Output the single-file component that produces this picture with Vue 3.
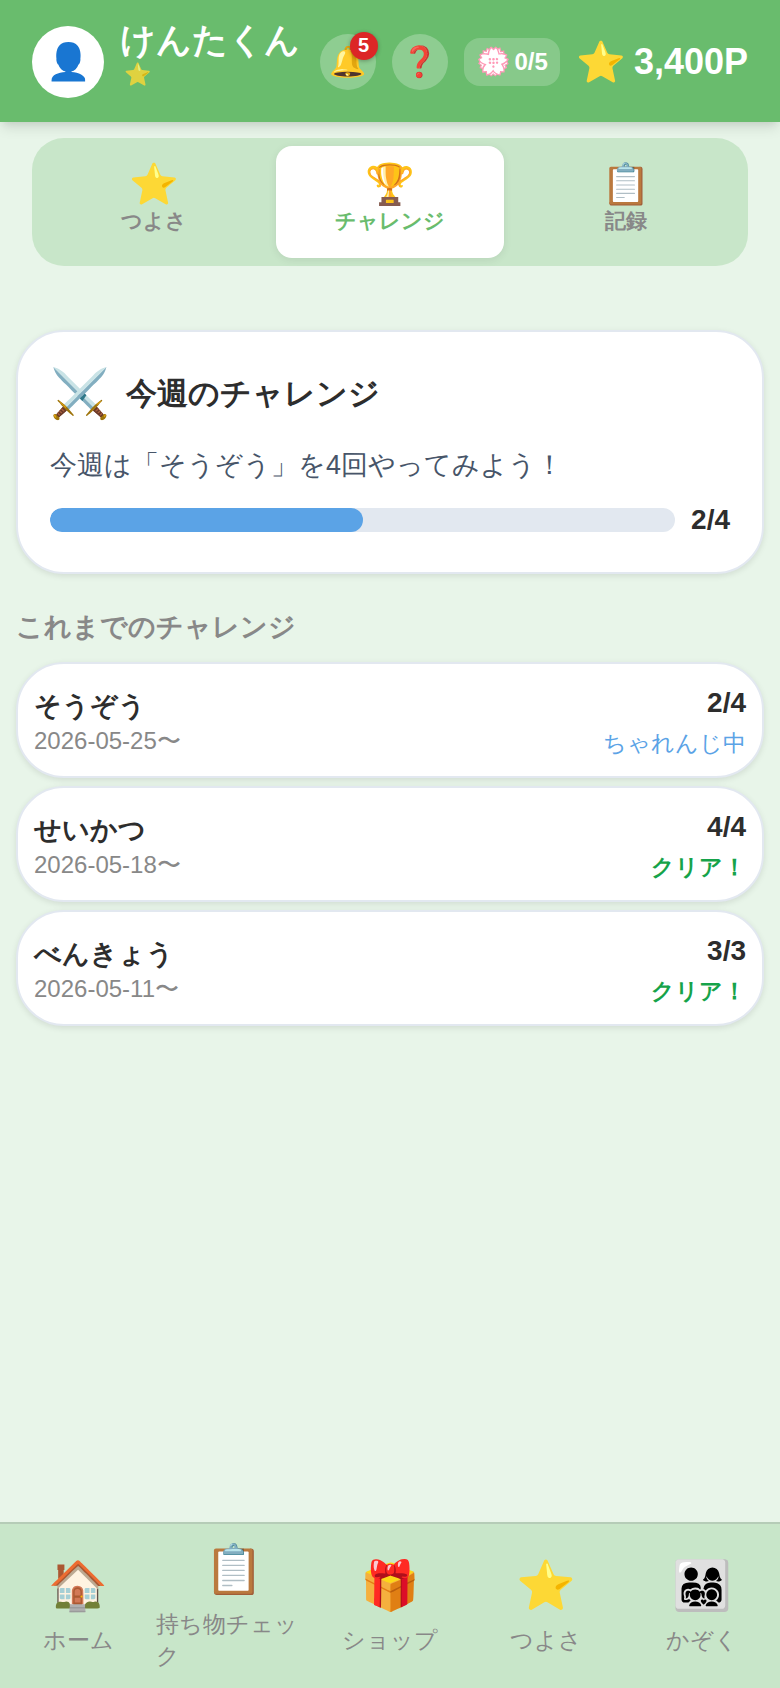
<script setup>
import { ref } from 'vue'

const tabs = [
  { id: 'strength', icon: '⭐', label: 'つよさ' },
  { id: 'challenge', icon: '🏆', label: 'チャレンジ' },
  { id: 'record', icon: '📋', label: '記録' }
]
const activeTab = ref('challenge')

const current = { done: 2, goal: 4 }

const history = [
  { name: 'そうぞう', date: '2026-05-25〜', score: '2/4', status: 'ちゃれんじ中', cleared: false },
  { name: 'せいかつ', date: '2026-05-18〜', score: '4/4', status: 'クリア！', cleared: true },
  { name: 'べんきょう', date: '2026-05-11〜', score: '3/3', status: 'クリア！', cleared: true }
]

const navItems = [
  { icon: '🏠', label: 'ホーム' },
  { icon: '📋', label: '持ち物チェック' },
  { icon: '🎁', label: 'ショップ' },
  { icon: '⭐', label: 'つよさ' },
  { icon: '👨‍👩‍👧‍👦', label: 'かぞく' }
]
</script>

<template>
  <div class="app">
    <header class="header">
      <button class="avatar" type="button" aria-label="プロフィール">👤</button>
      <div class="profile">
        <div class="name">けんたくん</div>
        <div class="rank">⭐</div>
      </div>
      <div class="actions">
        <button class="round" type="button" aria-label="おしらせ">🔔<span class="badge">5</span></button>
        <button class="round" type="button" aria-label="ヘルプ">❓</button>
        <button class="stamp" type="button"><span class="stamp-icon">💮</span><b>0/5</b></button>
        <div class="points"><span class="points-icon">⭐</span><b>3,400P</b></div>
      </div>
    </header>

    <div class="tabs" role="tablist">
      <button
        v-for="tab in tabs"
        :key="tab.id"
        class="tab"
        :class="{ active: activeTab === tab.id }"
        type="button"
        role="tab"
        :aria-selected="activeTab === tab.id"
        @click="activeTab = tab.id"
      >
        <span class="tab-icon">{{ tab.icon }}</span>
        <span class="tab-label">{{ tab.label }}</span>
      </button>
    </div>

    <main class="main">
      <section class="card weekly">
        <div class="weekly-head">
          <span class="weekly-icon">⚔️</span>
          <h2>今週のチャレンジ</h2>
        </div>
        <p>今週は「そうぞう」を4回やってみよう！</p>
        <div class="progress">
          <div class="track">
            <div class="fill" :style="{ width: (current.done / current.goal) * 100 + '%' }"></div>
          </div>
          <b>{{ current.done }}/{{ current.goal }}</b>
        </div>
      </section>

      <h3>これまでのチャレンジ</h3>
      <ul class="history">
        <li v-for="item in history" :key="item.date" class="card row">
          <div>
            <div class="row-name">{{ item.name }}</div>
            <div class="row-date">{{ item.date }}</div>
          </div>
          <div class="row-result">
            <div class="row-score">{{ item.score }}</div>
            <div class="row-status" :class="{ cleared: item.cleared }">{{ item.status }}</div>
          </div>
        </li>
      </ul>
    </main>

    <nav class="nav">
      <a v-for="item in navItems" :key="item.label" href="#">
        <span class="nav-icon">{{ item.icon }}</span>
        <span class="nav-label">{{ item.label }}</span>
      </a>
    </nav>
  </div>
</template>

<style>
body {
  margin: 0;
  background: #e8f5e9;
}
</style>

<style scoped>
.app {
  min-height: 100vh;
  display: flex;
  flex-direction: column;
  background: #e8f5e9;
  color: #2d2d2d;
  font-family: "Liberation Sans", sans-serif;
  font-size: 28px;
  line-height: 42px;
}
.app * {
  box-sizing: border-box;
}
button {
  margin: 0;
  padding: 0;
  border: 0;
  background: none;
  color: inherit;
  font: inherit;
  cursor: pointer;
}
.header {
  display: flex;
  align-items: center;
  gap: 16px;
  padding: 26px 32px 24px;
  background: #69bc6d;
  color: #fff;
  box-shadow: 0 8px 12px -2px rgba(0, 0, 0, 0.1), 0 4px 8px -4px rgba(0, 0, 0, 0.1);
}
.avatar {
  flex: none;
  width: 72px;
  height: 72px;
  border-radius: 50%;
  background: #fff;
  font-size: 36px;
}
.profile {
  flex: 1;
  margin: -16px 0 0;
  white-space: nowrap;
}
.name {
  font-size: 35px;
  font-weight: 700;
  line-height: 42px;
}
.rank {
  padding: 0 4px;
  font-size: 22px;
  line-height: 28px;
  opacity: 0.8;
}
.actions {
  display: flex;
  align-items: center;
  gap: 16px;
}
.round {
  position: relative;
  width: 56px;
  height: 56px;
  border-radius: 50%;
  background: rgba(255, 255, 255, 0.25);
  font-size: 30px;
}
.badge {
  position: absolute;
  top: -2px;
  right: -2px;
  width: 28px;
  height: 28px;
  border-radius: 50%;
  background: #dc2626;
  box-shadow: 0 1px 4px rgba(0, 0, 0, 0.3);
  font-size: 20px;
  font-weight: 700;
  line-height: 26px;
  text-align: center;
}
.stamp {
  display: flex;
  align-items: center;
  justify-content: center;
  gap: 4px;
  height: 48px;
  padding: 0 12px;
  border-radius: 16px;
  background: rgba(255, 255, 255, 0.2);
  font-size: 24px;
}
.stamp-icon {
  font-size: 28px;
}
.points {
  display: flex;
  align-items: center;
  gap: 8px;
  font-size: 36px;
}
.points-icon {
  font-size: 40px;
}
.tabs {
  display: grid;
  grid-template-columns: repeat(3, 1fr);
  gap: 8px;
  margin: 16px 32px 0;
  padding: 8px;
  border-radius: 32px;
  background: #c8e6c9;
}
.tab {
  display: flex;
  flex-direction: column;
  align-items: center;
  padding: 16px 0 22px;
  border-radius: 16px;
  color: #888;
  font-weight: 700;
}
.tab.active {
  background: #fff;
  color: #69bc6d;
  box-shadow: 0 2px 8px rgba(0, 0, 0, 0.08);
}
.tab-icon {
  font-size: 40px;
  line-height: 44px;
}
.tab-label {
  font-size: 21px;
  line-height: 30px;
}
.main {
  flex: 1;
  padding: 64px 16px 32px;
}
.card {
  border: 2px solid #e2e8f0;
  border-radius: 48px;
  background: #fff;
  box-shadow: 0 2px 6px rgba(0, 0, 0, 0.1);
}
.weekly {
  padding: 32px;
}
.weekly-head {
  display: flex;
  align-items: center;
  gap: 16px;
}
.weekly-icon {
  font-size: 48px;
  line-height: 60px;
}
h2 {
  margin: 0;
  font-size: 31px;
  line-height: 48px;
}
p {
  margin: 20px 0 14px;
  color: #475569;
  font-size: 27px;
}
.progress {
  display: flex;
  align-items: center;
  gap: 16px;
  line-height: 40px;
}
.track {
  flex: 1;
  height: 24px;
  border-radius: 12px;
  background: #e2e8f0;
  overflow: hidden;
}
.fill {
  height: 100%;
  border-radius: 12px;
  background: #5ba3e6;
}
h3 {
  margin: 32px 0 14px;
  color: #888;
  font-size: 27px;
  line-height: 42px;
}
.history {
  display: grid;
  gap: 8px;
  margin: 0;
  padding: 0;
  list-style: none;
}
.row {
  display: flex;
  align-items: center;
  justify-content: space-between;
  padding: 16px;
}
.row-name,
.row-score {
  font-weight: 700;
}
.row-name {
  font-size: 27px;
  line-height: 42px;
}
.row-date {
  color: #888;
  font-size: 24px;
  line-height: 28px;
}
.row-result {
  text-align: right;
}
.row-score {
  line-height: 46px;
}
.row-status {
  color: #5ba3e6;
  font-size: 23px;
  line-height: 34px;
}
.row-status.cleared {
  color: #16a34a;
  font-weight: 700;
}
.nav {
  display: grid;
  grid-template-columns: repeat(5, 1fr);
  padding: 16px 0;
  border-top: 2px solid #b5ccb7;
  background: #c8e6c9;
}
.nav a {
  display: flex;
  flex-direction: column;
  align-items: center;
  justify-content: center;
  gap: 8px;
  color: #888;
  text-decoration: none;
}
.nav-icon {
  font-size: 48px;
  line-height: 60px;
}
.nav-label {
  font-size: 23px;
  line-height: 32px;
}
</style>
